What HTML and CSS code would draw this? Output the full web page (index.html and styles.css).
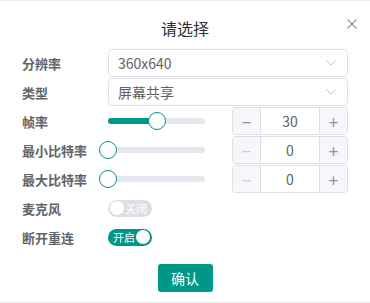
FILE: index.html
```html
<!DOCTYPE html>
<html lang="zh">
<head>
<meta charset="utf-8">
<title>请选择</title>
<link rel="stylesheet" href="styles.css">
</head>
<body>
<div class="dialog">
  <div class="header">
    <span class="title">请选择</span>
    <span class="close" aria-label="关闭">
      <svg width="10" height="10" viewBox="0 0 10 10"><path d="M0.5 0.5 L9.5 9.5 M9.5 0.5 L0.5 9.5" stroke="#909399" stroke-width="1.1" fill="none"/></svg>
    </span>
  </div>
  <div class="form">
    <div class="row">
      <label class="label">分辨率</label>
      <div class="select">
        <span class="select-value">360x640</span>
        <svg class="chev" width="10" height="6" viewBox="0 0 10 6"><path d="M0.5 0.5 L5 5 L9.5 0.5" stroke="#c0c4cc" stroke-width="1" fill="none"/></svg>
      </div>
    </div>
    <div class="row">
      <label class="label">类型</label>
      <div class="select">
        <span class="select-value">屏幕共享</span>
        <svg class="chev" width="10" height="6" viewBox="0 0 10 6"><path d="M0.5 0.5 L5 5 L9.5 0.5" stroke="#c0c4cc" stroke-width="1" fill="none"/></svg>
      </div>
    </div>
    <div class="row">
      <label class="label">帧率</label>
      <div class="control">
        <div class="slider"><div class="track"><div class="fill" style="width:50%"></div><div class="handle" style="left:50%"></div></div></div>
        <div class="number">
          <span class="nbtn">−</span>
          <span class="nval">30</span>
          <span class="nbtn">+</span>
        </div>
      </div>
    </div>
    <div class="row">
      <label class="label">最小比特率</label>
      <div class="control">
        <div class="slider"><div class="track"><div class="fill" style="width:0%"></div><div class="handle" style="left:0%"></div></div></div>
        <div class="number">
          <span class="nbtn disabled">−</span>
          <span class="nval">0</span>
          <span class="nbtn">+</span>
        </div>
      </div>
    </div>
    <div class="row">
      <label class="label">最大比特率</label>
      <div class="control">
        <div class="slider"><div class="track"><div class="fill" style="width:0%"></div><div class="handle" style="left:0%"></div></div></div>
        <div class="number">
          <span class="nbtn disabled">−</span>
          <span class="nval">0</span>
          <span class="nbtn">+</span>
        </div>
      </div>
    </div>
    <div class="row">
      <label class="label">麦克风</label>
      <div class="switch off"><span class="knob"></span><span class="stext">关闭</span></div>
    </div>
    <div class="row">
      <label class="label">断开重连</label>
      <div class="switch on"><span class="stext">开启</span><span class="knob"></span></div>
    </div>
  </div>
  <div class="footer">
    <button class="btn">确认</button>
  </div>
</div>
</body>
</html>
```
FILE: styles.css
```css
* { box-sizing: border-box; }
html, body { margin: 0; padding: 0; background: #fff; }
body {
  font-family: "Noto Sans CJK SC", "Noto Sans", sans-serif;
  width: 370px;
  height: 303px;
  overflow: hidden;
}
.dialog {
  height: 303px;
  border-top: 1px solid #eceef3;
  border-bottom: 1px solid #e6e8ec;
  background: #fff;
}
.header {
  height: 48px;
  display: flex;
  align-items: center;
  justify-content: center;
  position: relative;
}
.title {
  font-size: 16px;
  color: #303133;
  line-height: 24px;
  margin-top: 6px;
}
.close {
  position: absolute;
  right: 13px;
  top: 18px;
  width: 10px;
  height: 10px;
  display: flex;
}
.form {
  padding: 0 22px;
}
.row {
  display: flex;
  align-items: center;
  height: 28px;
  margin-bottom: 1px;
}
.label {
  width: 86px;
  flex: none;
  font-size: 13px;
  font-weight: 700;
  color: #62646a;
}
.select {
  flex: 1;
  height: 28px;
  border: 1px solid #dcdfe6;
  border-radius: 4px;
  display: flex;
  align-items: center;
  justify-content: space-between;
  padding: 0 11px 0 9px;
}
.select-value {
  font-size: 14px;
  color: #606266;
}
.control {
  flex: 1;
  display: flex;
  align-items: center;
  justify-content: space-between;
}
.slider {
  width: 97px;
  height: 28px;
  display: flex;
  align-items: center;
}
.track {
  position: relative;
  width: 100%;
  height: 6px;
  border-radius: 3px;
  background: #e4e7ed;
}
.fill {
  height: 6px;
  border-radius: 3px;
  background: #009688;
}
.handle {
  position: absolute;
  top: 50%;
  width: 18px;
  height: 18px;
  margin-left: -9px;
  margin-top: -9px;
  border-radius: 50%;
  background: #fff;
  border: 1.5px solid #009688;
}
.number {
  width: 116px;
  height: 28px;
  border: 1px solid #dcdfe6;
  border-radius: 4px;
  display: flex;
  overflow: hidden;
}
.nbtn {
  width: 28px;
  flex: none;
  background: #f5f7fa;
  color: #909399;
  font-size: 17px;
  display: flex;
  align-items: center;
  justify-content: center;
}
.nbtn:first-child { border-right: 1px solid #dcdfe6; }
.nbtn:last-child { border-left: 1px solid #dcdfe6; }
.nbtn.disabled { color: #c9ccd3; }
.nval {
  flex: 1;
  display: flex;
  align-items: center;
  justify-content: center;
  font-size: 14px;
  color: #606266;
}
.switch {
  width: 44px;
  height: 17px;
  border-radius: 9px;
  display: flex;
  align-items: center;
  padding: 0 2px;
  gap: 1px;
  overflow: hidden;
}
.switch.off { background: #dcdfe6; }
.switch.on { background: #009688; justify-content: flex-end; }
.knob {
  width: 14px;
  height: 14px;
  border-radius: 50%;
  background: #fff;
  flex: none;
}
.stext {
  font-size: 11px;
  color: #fff;
  line-height: 14px;
  white-space: nowrap;
}
.footer {
  display: flex;
  justify-content: center;
  margin-top: 13px;
}
.btn {
  width: 55px;
  height: 28px;
  border: none;
  border-radius: 3px;
  background: #009688;
  color: #fff;
  font-family: "Noto Sans CJK SC", "Noto Sans", sans-serif;
  font-size: 14px;
  padding: 0;
}
```
